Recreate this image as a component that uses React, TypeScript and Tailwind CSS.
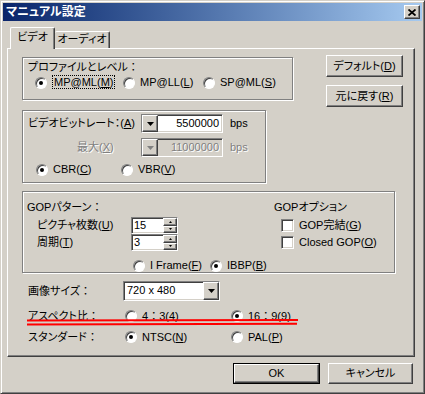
const raised =
  'border border-t-white border-l-white border-r-[#404040] border-b-[#404040] shadow-[inset_-1px_-1px_0_#808080] bg-[#d4d0c8]';
const sunken =
  'border border-t-[#808080] border-l-[#808080] border-r-white border-b-white shadow-[inset_1px_1px_0_#404040,inset_-1px_-1px_0_#d4d0c8]';
const etched = 'border border-[#808080] shadow-[inset_1px_1px_0_#fff,1px_1px_0_#fff]';
const disabled = 'text-[#808080] [text-shadow:1px_1px_0_#fff]';

// full-width colon, kept at full width (palt would squeeze it)
const C = () => <span className="[font-feature-settings:normal]">：</span>;

function Down({ color = '#000' }: { color?: string }) {
  return (
    <svg width="7" height="4" viewBox="0 0 7 4">
      <path d="M0 0h7L3.5 4z" fill={color} />
    </svg>
  );
}

function Radio({ checked, children, className = '' }: { checked?: boolean; children: React.ReactNode; className?: string }) {
  return (
    <div className={`flex items-center gap-[5px] ${className}`}>
      <span className="w-[12px] h-[12px] shrink-0 rounded-full bg-white border border-t-[#808080] border-l-[#808080] border-r-white border-b-white shadow-[inset_1px_1px_0_#404040] flex items-center justify-center">
        {checked && <span className="w-[4px] h-[4px] rounded-full bg-black" />}
      </span>
      <span className="whitespace-nowrap">{children}</span>
    </div>
  );
}

function Check({ children }: { children: React.ReactNode }) {
  return (
    <div className="flex items-center gap-[5px] ml-[7px] h-[17px]">
      <span className={`w-[13px] h-[13px] bg-white ${sunken}`} />
      <span className="whitespace-nowrap">{children}</span>
    </div>
  );
}

function Spin({ value }: { value: string }) {
  return (
    <div className={`w-[47px] h-[17px] flex bg-white ${sunken}`}>
      <span className="flex-1 pl-[2px] pt-[1px]">{value}</span>
      <div className="w-[14px] flex flex-col">
        <span className={`flex-1 flex items-center justify-center ${raised}`}>
          <svg width="3" height="2" viewBox="0 0 3 2"><path d="M0 2h3L1.5 0z" fill="#000" /></svg>
        </span>
        <span className={`flex-1 flex items-center justify-center ${raised}`}>
          <svg width="3" height="2" viewBox="0 0 3 2"><path d="M0 0h3L1.5 2z" fill="#000" /></svg>
        </span>
      </div>
    </div>
  );
}

function RateBox({ value, off }: { value: string; off?: boolean }) {
  return (
    <div className={`w-[82px] h-[19px] flex ${off ? 'bg-[#d4d0c8]' : 'bg-white'} ${sunken}`}>
      <span className={`w-[16px] flex items-center justify-center ${raised}`}>
        <Down color={off ? '#808080' : '#000'} />
      </span>
      <span className={`flex-1 text-right pr-[3px] pt-[2px] ${off ? disabled : ''}`}>{value}</span>
    </div>
  );
}

export default function App() {
  return (
    <div className="relative w-[425px] h-[394px] bg-[#d4d0c8] border border-t-[#d4d0c8] border-l-[#d4d0c8] border-r-[#404040] border-b-[#404040] shadow-[inset_1px_1px_0_#fff,inset_-1px_-1px_0_#808080] p-[2px] flex flex-col text-[11px] leading-[13px] text-black font-['Liberation_Sans','Noto_Sans_CJK_JP',sans-serif] [font-feature-settings:'palt']">
      {/* Title bar */}
      <div className="h-[18px] flex items-center justify-between pl-[3px] pr-[2px] bg-linear-to-r from-[#0a246a] to-[#a6caf0]">
        <span className="text-white font-bold text-[12px]">マニュアル設定</span>
        <span className={`w-[16px] h-[14px] flex items-center justify-center ${raised}`}>
          <svg width="8" height="7" viewBox="0 0 8 7">
            <path d="M0.5 0.5L7.5 6.5M7.5 0.5L0.5 6.5" stroke="#000" strokeWidth="1.8" />
          </svg>
        </span>
      </div>

      <div className="pt-[6px] pl-[4px]">
        {/* Tabs */}
        <div className="flex items-end pl-[3px]">
          <div className="relative z-10 -mb-px h-[22px] w-[45px] bg-[#d4d0c8] border-t border-l border-r border-t-white border-l-white border-r-[#404040] shadow-[inset_-1px_0_0_#808080] rounded-t-[2px] flex justify-center pt-[3px]">
            ビデオ
          </div>
          <div className="h-[17px] w-[55px] border-t border-r border-t-white border-r-[#404040] shadow-[inset_-1px_0_0_#808080] rounded-t-[2px] flex justify-center pt-[1px]">
            オーディオ
          </div>
        </div>

        {/* Panel */}
        <div className="w-[408px] h-[309px] border border-t-white border-l-white border-r-[#404040] border-b-[#404040] shadow-[inset_-1px_-1px_0_#808080] pl-[14px] pt-[6px]">
          <div className="flex items-start">
            <div className="w-[271px]">
              <div className={`mt-[2px] h-[43px] w-[271px] pl-[5px] pt-[3px] ${etched}`}>
                <div>プロファイルとレベル<C /></div>
                <div className="flex mt-[2px] ml-[7px]">
                  <Radio checked className="w-[88px]">
                    <span className="border border-dotted border-black px-px">MP@ML(<u>M</u>)</span>
                  </Radio>
                  <Radio className="w-[80px]">MP@LL(<u>L</u>)</Radio>
                  <Radio>SP@ML(<u>S</u>)</Radio>
                </div>
              </div>

              <div className={`mt-[10px] h-[73px] w-[244px] pt-[3px] ${etched}`}>
                <div className="flex items-center ml-[5px]">
                  <span className="w-[113px] whitespace-nowrap">ビデオビットレート：(<u>A</u>)</span>
                  <RateBox value="5500000" />
                  <span className="ml-[7px]">bps</span>
                </div>
                <div className="flex items-center ml-[5px] mt-[5px]">
                  <span className={`w-[113px] pl-[49px] ${disabled}`}>最大(<u>X</u>)</span>
                  <RateBox value="11000000" off />
                  <span className={`ml-[7px] ${disabled}`}>bps</span>
                </div>
                <div className="flex ml-[13px] mt-[6px]">
                  <Radio checked className="w-[85px]">CBR(<u>C</u>)</Radio>
                  <Radio>VBR(<u>V</u>)</Radio>
                </div>
              </div>
            </div>

            <div className="ml-[33px] flex flex-col gap-[8px]">
              <div className={`w-[77px] h-[22px] flex items-center justify-center ${raised}`}>
                デフォルト(<u>D</u>)
              </div>
              <div className={`w-[77px] h-[22px] flex items-center justify-center ${raised}`}>
                元に戻す(<u>R</u>)
              </div>
            </div>
          </div>

          {/* GOP */}
          <div className={`mt-[8px] h-[82px] w-[373px] flex ${etched}`}>
            <div className="w-[251px] pl-[4px] pt-[9px]">
              <div>GOPパターン<C /></div>
              <div className="flex items-center mt-[3px] ml-[10px]">
                <span className="w-[94px]">ピクチャ枚数(<u>U</u>)</span>
                <Spin value="15" />
              </div>
              <div className="flex items-center ml-[10px]">
                <span className="w-[94px]">周期(<u>T</u>)</span>
                <Spin value="3" />
              </div>
              <div className="flex mt-[8px] ml-[106px]">
                <Radio className="w-[77px]">I Frame(<u>F</u>)</Radio>
                <Radio checked>IBBP(<u>B</u>)</Radio>
              </div>
            </div>
            <div className="pt-[9px]">
              <div>GOPオプション</div>
              <div className="mt-[3px]">
                <Check>GOP完結(<u>G</u>)</Check>
                <Check>Closed GOP(<u>O</u>)</Check>
              </div>
            </div>
          </div>

          {/* Image size */}
          <div className="flex items-center mt-[8px] h-[20px]">
            <span className="w-[101px] pl-[6px]">画像サイズ<C /></span>
            <div className={`w-[97px] h-[20px] flex bg-white ${sunken}`}>
              <span className="flex-1 pl-[3px] pt-[2px]">720 x 480</span>
              <span className={`w-[16px] flex items-center justify-center ${raised}`}>
                <Down />
              </span>
            </div>
          </div>

          <div className="flex items-center mt-[8px] h-[14px]">
            <span className="w-[103px] pl-[6px]">アスペクト比<C /></span>
            <Radio className="w-[106px]">4<C />3(4)</Radio>
            <Radio checked>16<C />9(9)</Radio>
          </div>
          <div className="flex items-center mt-[7px] h-[14px]">
            <span className="w-[103px] pl-[6px]">スタンダード<C /></span>
            <Radio checked className="w-[106px]">NTSC(<u>N</u>)</Radio>
            <Radio>PAL(<u>P</u>)</Radio>
          </div>
        </div>

        {/* Bottom buttons */}
        <div className="flex mt-[6px] pl-[226px] gap-[8px]">
          <div className="w-[87px] h-[21px] border border-black">
            <div className={`w-full h-full flex items-center justify-center ${raised}`}>OK</div>
          </div>
          <div className={`w-[85px] h-[21px] flex items-center justify-center ${raised}`}>キャンセル</div>
        </div>
      </div>

      {/* red annotation */}
      <svg className="absolute left-[26px] top-[314px]" width="272" height="12" viewBox="0 0 272 12">
        <path d="M0 5.5 L271 5" stroke="#f00" strokeWidth="2" />
        <path d="M0 9.5 L270 8.8" stroke="#f00" strokeWidth="2" />
      </svg>
    </div>
  );
}
